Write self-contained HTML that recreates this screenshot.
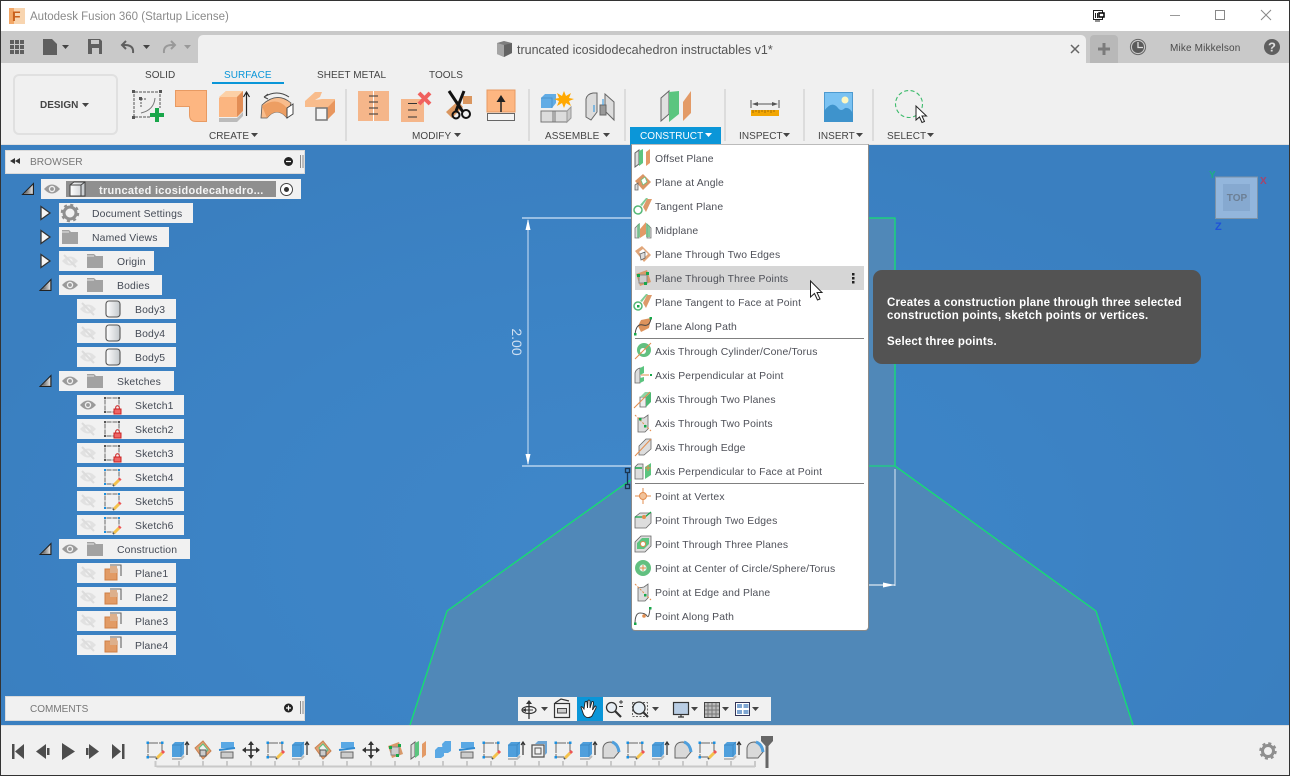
<!DOCTYPE html>
<html><head><meta charset="utf-8"><title>Autodesk Fusion 360</title>
<style>
html,body{margin:0;padding:0;width:1290px;height:776px;overflow:hidden;background:#f0f0f0}
body{position:relative;font-family:"Liberation Sans",sans-serif;color:#444}
div{position:absolute;box-sizing:border-box}
.t{white-space:nowrap;line-height:14px;height:14px}
.lab{font-size:10px;color:#444;white-space:nowrap;line-height:12px;margin-top:4px;letter-spacing:.05px}
.mi{left:655px;font-size:10.4px;letter-spacing:.14px;color:#4e5058;white-space:nowrap;line-height:14px;height:14px;margin-top:6px}
.row{background:#f1f1f1;height:20px}
.rt{font-size:10.4px;letter-spacing:.15px;color:#444a55;white-space:nowrap;line-height:14px;height:14px;margin-top:6px}
svg{position:absolute;left:0;top:0}
</style></head><body>
<!-- title bar -->
<div style="left:0;top:0;width:1290px;height:31px;background:#fff"></div>
<div class="t" style="left:30px;top:10px;font-size:11.5px;color:#8a8a8a">Autodesk Fusion 360 (Startup License)</div>
<!-- tab bar -->
<div style="left:0;top:31px;width:1290px;height:32px;background:#c9c9c9"></div>
<div style="left:198px;top:35px;width:888px;height:28px;background:#f0f0f0;border-radius:5px 5px 0 0"></div>
<div style="left:1090px;top:35px;width:28px;height:28px;background:#b8b8b8;border-radius:4px 4px 0 0"></div>
<div class="t" style="left:517px;top:43px;font-size:12.5px;color:#555">truncated icosidodecahedron instructables v1*</div>
<div class="t" style="left:1170px;top:42px;font-size:10px;letter-spacing:.15px;color:#4a4a4a">Mike Mikkelson</div>
<!-- ribbon -->
<div style="left:0;top:63px;width:1290px;height:82px;background:#f0f0f0"></div>
<div style="left:0;top:144px;width:1290px;height:1px;background:#e0e0e0"></div>
<div style="left:13px;top:74px;width:105px;height:61px;border:2px solid #e0e0e0;border-radius:6px"></div>
<div class="t" style="left:40px;top:99px;font-size:10px;font-weight:bold;color:#444">DESIGN</div>
<div class="lab" style="left:145px;top:66px">SOLID</div>
<div class="lab" style="left:224px;top:66px;color:#0a96d8">SURFACE</div>
<div style="left:212px;top:82px;width:72px;height:2px;background:#0a96d8"></div>
<div class="lab" style="left:317px;top:66px">SHEET METAL</div>
<div class="lab" style="left:429px;top:66px">TOOLS</div>
<div style="left:630px;top:127px;width:91px;height:18px;background:#0b96d8"></div>
<div class="lab" style="left:209px;top:127px">CREATE</div>
<div class="lab" style="left:412px;top:127px">MODIFY</div>
<div class="lab" style="left:545px;top:127px">ASSEMBLE</div>
<div class="lab" style="left:640px;top:127px;color:#fff">CONSTRUCT</div>
<div class="lab" style="left:739px;top:127px">INSPECT</div>
<div class="lab" style="left:818px;top:127px">INSERT</div>
<div class="lab" style="left:887px;top:127px">SELECT</div>
<!-- canvas -->
<div style="left:0;top:145px;width:1290px;height:581px;background:radial-gradient(ellipse 700px 420px at 640px 400px,#4087c9 0%,#3c83c5 60%,#3a7fc0 100%)"></div>
<!-- timeline -->
<div style="left:0;top:725px;width:1290px;height:51px;background:#f0f0f0;border-top:1px solid #dcdcdc"></div>

<svg width="1290" height="776" viewBox="0 0 1290 776" xmlns="http://www.w3.org/2000/svg">
<defs>
<g id="caret"><path d="M0 0H7L3.5 4Z" fill="#444"/></g>
<g id="eye"><path d="M-8 0Q0-9 8 0Q0 9-8 0Z" fill="#9a9a9a"/><circle r="3.2" fill="#f1f1f1"/><circle r="1.9" fill="#9a9a9a"/></g>
<g id="eyeoff"><path d="M-8 0Q0-9 8 0Q0 9-8 0Z" fill="#e1e1e1"/><circle r="2.6" fill="#f1f1f1"/><path d="M-6-6 6 6" stroke="#dcdcdc" stroke-width="2"/></g>
<g id="folder"><path d="M-8-7H-1L1-5H8V7H-8Z" fill="#a2a2a2"/><path d="M-8-5H-1" stroke="#e6e6e6"/></g>
<linearGradient id="bg" x1="0" x2="1"><stop offset="0" stop-color="#fff"/><stop offset="1" stop-color="#c4c8cc"/></linearGradient>
<g id="body"><rect x="-7" y="-8" width="14" height="16" rx="3" fill="url(#bg)" stroke="#555" stroke-width="1.1"/></g>
<g id="skbase"><path d="M-5.5-7H5.5M-7-5.5V5.5M-5.5 7H3M7-5.5V2" stroke="#666" stroke-width="1" fill="none" stroke-dasharray="5 1"/></g>
<g id="sklock"><use href="#skbase"/><g fill="#555"><rect x="-8" y="-8" width="2" height="2"/><rect x="6" y="-8" width="2" height="2"/><rect x="-8" y="6" width="2" height="2"/></g><rect x="2" y="4" width="7" height="5" fill="#e66" stroke="#c22"/><path d="M3.7 4V2.5a1.8 1.8 0 0 1 3.6 0V4" fill="none" stroke="#c22"/></g>
<g id="skpen"><use href="#skbase"/><g fill="#1a8fe0"><rect x="-8" y="-8" width="2" height="2"/><rect x="6" y="-8" width="2" height="2"/><rect x="-8" y="6" width="2" height="2"/></g><path d="M2 8 7 3" stroke="#f4c24c" stroke-width="3"/><path d="M7 3 8.5 1.500" stroke="#ee5555" stroke-width="3"/><path d="M1 9 2 8" stroke="#555" stroke-width="2"/></g>
<g id="plane"><path d="M-3-8H8V3" fill="none" stroke="#666" stroke-width="1.1"/><rect x="-8" y="-4" width="12" height="11" fill="#e29b65" stroke="#cf7f45"/><rect x="-3" y="-7" width="7" height="7" fill="#ddb08c"/></g>
<g id="tri"><path d="M0 11 11 0V11Z" fill="#999" stroke="#222" stroke-width="1"/><path d="M2 10 10 2V10Z" fill="url(#tg)"/></g>
<linearGradient id="tg" x1="0" x2="1"><stop offset="0" stop-color="#555"/><stop offset="1" stop-color="#ddd"/></linearGradient>
<g id="exp"><path d="M0 0 9 6.500 0 13Z" fill="#f5f5f5" stroke="#333" stroke-width="1.300"/></g>
<!-- timeline icons, centred -->
<g id="tsk"><path d="M-6-7H6M-7-6V6M-6 7H1M7-6V1" stroke="#666" fill="none" stroke-dasharray="9 1"/><g fill="#1a8fe0"><rect x="-8.500" y="-8.500" width="2.500" height="2.500"/><rect x="6" y="-8.500" width="2.500" height="2.500"/><rect x="-8.500" y="6" width="2.500" height="2.500"/></g><path d="M2 8 7 3" stroke="#f4c24c" stroke-width="3"/><path d="M7 3 9 1" stroke="#ee5555" stroke-width="3"/><path d="M1 9 2 8" stroke="#555" stroke-width="2"/></g>
<g id="tex"><path d="M-7-5-4-8H5V4L2 7H-7Z" fill="#4f9fdc"/><path d="M-7-5H2V7M2-5 5-8" stroke="#3d8ac4" fill="none"/><path d="M-7 9H2L5 6" stroke="#bbb" stroke-width="2" fill="none"/><path d="M8-8V5M6-5 8-8 10-5" stroke="#333" stroke-width="1.200" fill="none"/></g>
<g id="tpl"><path d="M-8-2 0-9 8 1 0 9Z" fill="#e0a075" stroke="#c98250"/><path d="M-4-2 0-6 5 0 0 5Z" fill="#f1f1f1" stroke="#5cc47f"/><rect x="-3" y="0" width="6" height="6" fill="#ccc" stroke="#555"/></g>
<g id="tsp"><path d="M-6-8H7V-2H-6Z" fill="#5aa8e4"/><path d="M-8 0 8-2" stroke="#2f8ad0" stroke-width="2"/><path d="M-6 2H6V8H-6Z" fill="#ccc" stroke="#666"/></g>
<g id="tmv"><path d="M0-8V8M-8 0H8" stroke="#333" stroke-width="1.600"/><path d="M0-9-3-5H3ZM0 9-3 5H3ZM-9 0-5-3V3ZM9 0 5-3V3Z" fill="#333"/></g>
<g id="tpt"><path d="M-7-4 4-8 8 4-3 8Z" fill="#d89a6b"/><rect x="-4" y="-3" width="8" height="8" fill="#ccc" stroke="#888"/><g fill="#17a74a"><rect x="-6" y="-4" width="3" height="3"/><rect x="3" y="-6" width="3" height="3"/><rect x="1" y="4" width="3" height="3"/></g></g>
<g id="tof"><path d="M-8-5-4-8V6L-8 9Z" fill="#ddd" stroke="#666"/><path d="M-4-7 0-9V5L-4 8Z" fill="#5cc47f"/><path d="M3-6 7-9V5L3 8Z" fill="#e39a66"/></g>
<g id="tjoin"><path d="M-8 0-5-3H1V6L-2 8H-8ZM-1-6 2-9H8V1L5 3H0Z" fill="#5aa8e4"/></g>
<g id="tshell"><rect x="-7" y="-5" width="12" height="12" fill="none" stroke="#555" stroke-width="1.300"/><rect x="-4" y="-2" width="6" height="6" fill="none" stroke="#555"/><path d="M-4-6-1-9H8V3L6 5V-6Z" fill="#6da6d6"/></g>
<g id="tfl"><path d="M-8 8V-2Q-7-8 0-8Q8-6 8 2L3 8Z" fill="#d9d9d9" stroke="#666"/><path d="M1-8Q7-6 8 2" stroke="#4f9fdc" stroke-width="3" fill="none"/></g>
</defs>

<!-- canvas geometry -->
<path d="M410 725 447 611 632 479V218H895V466L1096 611 1133 725Z" fill="#5088b8"/>
<path d="M410 725 447 611 632 479" fill="none" stroke="#14e070" stroke-width="1.300"/>
<path d="M632 218H895V466L1096 611 1133 725" fill="none" stroke="#14e070" stroke-width="1.300"/>
<path d="M632 466H895" fill="none" stroke="#19d47e" stroke-width="1.300"/>
<g stroke="#b7d3ee" fill="none"><path d="M522 218H632M522 466H632" stroke-width="1.500"/><path d="M528 220V464" stroke-width="1.200"/><path d="M895 469V586" stroke="#dbe7f3"/><path d="M868 585H895" stroke="#fff"/></g>
<path d="M528 219 525.500 230H530.500ZM528 465 525.500 454H530.500Z" fill="#fff"/>
<path d="M895 585 883 582.500V587.500Z" fill="#fff"/>
<g fill="none" stroke="#1b3550" stroke-width="1.300"><rect x="625.500" y="468.500" width="4" height="4"/><rect x="625.500" y="484.500" width="4" height="4"/></g><path d="M627.500 472V485" stroke="#1b3550" stroke-width="1.300"/>
<text transform="translate(512 342) rotate(90)" font-family="Liberation Sans" font-size="14" fill="#cfe0f2" text-anchor="middle">2.00</text>

<!-- navcube -->
<rect x="1215.500" y="177" width="42" height="41.500" fill="#93b6dc" stroke="#7d93a8"/>
<rect x="1223" y="184" width="27" height="27" fill="#86a9d0"/>
<text x="1237" y="201" font-family="Liberation Sans" font-size="10" font-weight="bold" fill="#6c7f95" text-anchor="middle">TOP</text>
<text x="1209" y="178" font-family="Liberation Sans" font-size="10" font-weight="bold" fill="#1dae82">Y</text>
<text x="1260" y="184" font-family="Liberation Sans" font-size="10" font-weight="bold" fill="#a8436a">X</text>
<text x="1215" y="230" font-family="Liberation Sans" font-size="11" font-weight="bold" fill="#1f52d8">Z</text>

<!-- titlebar icons -->
<rect x="9" y="8" width="16" height="16" fill="#f8d5b0"/><path d="M9 8H14V24H9Z" fill="#f2a766"/>
<text x="12" y="21" font-family="Liberation Sans" font-size="14" font-weight="bold" fill="#c9601a">F</text>
<g fill="none" stroke="#222"><rect x="1093.500" y="10.500" width="9" height="9"/><path d="M1095.500 13V18M1097.500 13V18M1095 21H1100" stroke-width="1"/></g><rect x="1099" y="13" width="5" height="4" fill="#fff" stroke="#000" stroke-width="1.500"/>
<path d="M1170 15.500H1180" stroke="#999"/><rect x="1215.500" y="10.500" width="9" height="9" fill="none" stroke="#888"/><path d="M1261 10 1271 20M1271 10 1261 20" stroke="#888"/>
<!-- tab bar icons -->
<g fill="#5f5f5f"><rect x="10" y="40" width="4" height="4"/><rect x="15" y="40" width="4" height="4"/><rect x="20" y="40" width="4" height="4"/><rect x="10" y="45" width="4" height="4"/><rect x="15" y="45" width="4" height="4"/><rect x="20" y="45" width="4" height="4"/><rect x="10" y="50" width="4" height="4"/><rect x="15" y="50" width="4" height="4"/><rect x="20" y="50" width="4" height="4"/></g>
<path d="M43 39H52L57 44V55H43Z" fill="#5f5f5f"/>
<use href="#caret" x="62" y="45"/>
<path d="M88 39H100L102 41V54H88Z" fill="#5f5f5f"/><rect x="91" y="40" width="8" height="4" fill="#c9c9c9"/><rect x="92" y="48" width="7" height="6" fill="#c9c9c9"/>
<path d="M133 53Q134 45 125 45H122M126 41 122 45 126 49" fill="none" stroke="#5f5f5f" stroke-width="2"/>
<use href="#caret" x="143" y="45"/>
<path d="M164 53Q163 45 172 45H175M171 41 175 45 171 49" fill="none" stroke="#999" stroke-width="2"/>
<path d="M184 45H191L187.500 49Z" fill="#999"/>
<path d="M497 43 504 41 512 43V53L504 57 497 54Z" fill="#7e7e7e"/><path d="M497 43 504 45V57L497 54Z" fill="#a5a5a5"/><path d="M504 45 512 43V53L504 57Z" fill="#636363"/>
<path d="M1071 45 1079 53M1079 45 1071 53" stroke="#666" stroke-width="1.500"/>
<path d="M1098 49H1110M1104 43V55" stroke="#7b7b7b" stroke-width="3"/>
<circle cx="1138" cy="47" r="7.600" fill="none" stroke="#666"/><circle cx="1138" cy="47" r="6" fill="#5a5a5a"/><path d="M1138 42V47.500H1143" stroke="#ddd" fill="none" stroke-width="1.300"/>
<circle cx="1272" cy="47" r="8" fill="#5f5f5f"/>
<text x="1272" y="51.500" font-family="Liberation Sans" font-size="13" font-weight="bold" fill="#ddd" text-anchor="middle">?</text>

<!-- ribbon carets + separators -->
<use href="#caret" x="82" y="103"/>
<use href="#caret" x="251" y="133"/><use href="#caret" x="454" y="133"/><use href="#caret" x="603" y="133"/><path d="M705 133H712L708.500 137Z" fill="#fff"/><use href="#caret" x="783" y="133"/><use href="#caret" x="856" y="133"/><use href="#caret" x="927" y="133"/>
<g stroke="#dcdcdc" stroke-width="2"><path d="M346 89V141M529 89V141M625 89V141M725 89V141M804 89V141M873 89V141"/></g>

<!-- create -->
<g fill="none" stroke="#555"><path d="M135 92H159M134 94V116M135 117H150M160 94V108" stroke-dasharray="3 1"/><path d="M141 113Q154 110 155 98" stroke="#777"/><path d="M141 99H146M141 99V108" stroke-dasharray="2 1"/></g>
<g fill="#555"><rect x="132" y="90" width="3" height="3"/><rect x="159" y="90" width="3" height="3"/><rect x="132" y="116" width="3" height="3"/><rect x="139" y="97" width="3" height="3"/></g>
<path d="M157 108V122M150 115H164" stroke="#19a64a" stroke-width="4"/>
<path d="M175.500 90.500H206.500V121.500H196Q189.500 121.500 189.500 115V106.500H175.500Z" fill="#fdb681" stroke="#e89a62"/>
<path d="M219 98 226 91H243V111L237 117H219Z" fill="#fbb580"/><path d="M237 97H219L226 91H243Z" fill="#fcd0a6"/><path d="M237 97 243 91V111L237 117Z" fill="#e28d55"/><path d="M219 118H237L243 112V116L237 122H219Z" fill="#bbb"/><path d="M246.500 116V93M243.500 97 246.500 92 249.500 97" stroke="#222" stroke-width="1.200" fill="none"/>
<path d="M262 105Q277 91 291 103L287 118Q277 106 267 118H261Z" fill="#f8bc8c" stroke="#555" stroke-width=".8"/><path d="M262 106Q277 96 287 108V118Q277 106 267 118" fill="#ed9e62"/><path d="M264 97Q277 89 289 97M264 97 268 94M264 97 268 99" fill="none" stroke="#444"/><path d="M287 108 293 104V114L287 118Z" fill="#fff" stroke="#444"/>
<path d="M305 101 315 92H322L320 97 315 100 322 99 335 99V112L327 120H316V107H305Z" fill="#f8bc8c"/><path d="M335 100V112L327 120V108Z" fill="#e8965e"/><rect x="316" y="108" width="11" height="12" fill="#f4f4f4" stroke="#777" stroke-width="1.500"/>
<!-- modify -->
<rect x="358" y="91" width="31" height="30" fill="#f5b68a"/><path d="M373.500 91V121" stroke="#fff"/><path d="M369 96H378M369 102H378M369 108H378M369 114H378" stroke="#333"/>
<rect x="401" y="99" width="23" height="23" fill="#f5b68a"/><path d="M408 103.500H417M408 110H417M408 117H417" stroke="#333" stroke-width="1"/><path d="M419 93 430 104M430 93 419 104" stroke="#f0605e" stroke-width="4"/>
<path d="M463 96H472V104H463ZM446 112 458 101 463 107 452 118Z" fill="#da965f"/><path d="M449 91 463 112M464 91 456 111" stroke="#111" stroke-width="3"/><circle cx="456" cy="115" r="3.500" fill="none" stroke="#111" stroke-width="2"/><circle cx="466" cy="114" r="4" fill="none" stroke="#111" stroke-width="2"/>
<rect x="487" y="90" width="28" height="22" fill="#fdb681" stroke="#e89a62"/><rect x="487.500" y="113.500" width="27" height="7" fill="#f4f4f4" stroke="#666"/><path d="M501 112V99" stroke="#222" stroke-width="1.500"/><path d="M501 95 496.500 102H505.500Z" fill="#222"/>
<!-- assemble -->
<path d="M541 111H555V122H541ZM553 111H567V122H553Z" fill="#dcdcdc" stroke="#777"/><path d="M567 111 571 107V118L567 122Z" fill="#c9c9c9" stroke="#999"/><path d="M541 98 545 94H556V103L552 108H541Z" fill="#62ace5"/><path d="M541 98H552V108" fill="none" stroke="#4b94cd"/>
<path d="M564 91 566 96 571 93 569 98 574 99 569 101 571 106 566 103 564 108 562 103 557 106 559 101 554 99 559 98 557 93 562 96Z" fill="#ffa800"/>
<path d="M586 117V99Q587 94 593 93H597V112L591 120Z" fill="#dcdcdc" stroke="#666"/><path d="M605 94 614 102V120L605 111Z" fill="#dcdcdc" stroke="#666"/><rect x="600" y="105" width="6" height="10" fill="#999" stroke="#666"/><path d="M594 105V112M603 99V105" stroke="#2391dd"/>
<!-- construct -->
<path d="M661 98 669 91V114L661 121Z" fill="#e0e0e0" stroke="#666"/><path d="M669 92 679 91V114L669 122 669 114Z" fill="#5bc57f"/><path d="M683 102 691 91V113L683 121Z" fill="#e39a66"/>
<!-- inspect -->
<path d="M751 100V108M779 100V108M753 104H777" stroke="#555" fill="none"/><path d="M752 104 758 102V106ZM778 104 772 102V106Z" fill="#555"/><rect x="751" y="110" width="28" height="6" fill="#f2a602"/><path d="M753 110V113M756 110V112M759 110V113M762 110V112M765 110V113M768 110V112M771 110V113M774 110V112" stroke="#a86f00"/>
<!-- insert -->
<rect x="824" y="92" width="29" height="30" fill="#7ac2f2"/><rect x="824.500" y="92.500" width="28" height="29" fill="none" stroke="#4d9ad0"/><circle cx="845" cy="100" r="3.500" fill="#fdf6c0"/><path d="M824 122V111Q832 100 838 108Q841 112 845 108Q850 107 853 114V122Z" fill="#3e93cc"/>
<!-- select -->
<circle cx="909" cy="104" r="13.500" fill="none" stroke="#3dbb6c" stroke-dasharray="4 2.500" stroke-width="1.100"/>
<path d="M916 106 916 120 919.500 117 922 122.500 924.500 121.500 922 116 926.500 116Z" fill="#fff" stroke="#222"/>

<!-- browser -->
<rect x="5.500" y="150.500" width="299" height="23" fill="#f1f1f1" stroke="#dadada"/>
<path d="M15 158 10 161 15 164ZM20 158 15 161 20 164Z" fill="#333"/>
<circle cx="288.500" cy="161.500" r="4.500" fill="#222"/><path d="M286 161.500H291" stroke="#fff" stroke-width="1.200"/>
<path d="M300.500 155V168M303 155V168" stroke="#888"/>
<rect x="41" y="179" width="260" height="20" fill="#f1f1f1"/><rect x="66" y="181" width="210" height="16" fill="#8f8f8f"/>
<use href="#eye" x="52" y="189"/>
<path d="M70 185 74 182H85V196H70Z" fill="url(#bg)" stroke="#444"/>
<path d="M70 185H81V196M81 185 85 182" fill="none" stroke="#444"/>
<circle cx="286.500" cy="189.500" r="6" fill="#fff" stroke="#444"/><circle cx="286.500" cy="189.500" r="2.500" fill="#333"/>
<use href="#tri" x="22.500" y="183.500"/>
</svg>

<div class="t" style="left:30px;top:156px;font-size:10.2px;color:#777">BROWSER</div>
<div class="t" style="left:99px;top:184px;font-size:11px;letter-spacing:.28px;font-weight:bold;color:#f4f4f4">truncated icosidodecahedro...</div>

<div class="row" style="left:59px;top:203px;width:134px"></div><div class="rt" style="left:92px;top:202px">Document Settings</div>
<div class="row" style="left:59px;top:227px;width:110px"></div><div class="rt" style="left:92px;top:226px">Named Views</div>
<div class="row" style="left:59px;top:251px;width:95px"></div><div class="rt" style="left:117px;top:250px">Origin</div>
<div class="row" style="left:59px;top:275px;width:103px"></div><div class="rt" style="left:117px;top:274px">Bodies</div>
<div class="row" style="left:77px;top:299px;width:99px"></div><div class="rt" style="left:135px;top:298px">Body3</div>
<div class="row" style="left:77px;top:323px;width:99px"></div><div class="rt" style="left:135px;top:322px">Body4</div>
<div class="row" style="left:77px;top:347px;width:99px"></div><div class="rt" style="left:135px;top:346px">Body5</div>
<div class="row" style="left:59px;top:371px;width:115px"></div><div class="rt" style="left:117px;top:370px">Sketches</div>
<div class="row" style="left:77px;top:395px;width:107px"></div><div class="rt" style="left:135px;top:394px">Sketch1</div>
<div class="row" style="left:77px;top:419px;width:107px"></div><div class="rt" style="left:135px;top:418px">Sketch2</div>
<div class="row" style="left:77px;top:443px;width:107px"></div><div class="rt" style="left:135px;top:442px">Sketch3</div>
<div class="row" style="left:77px;top:467px;width:107px"></div><div class="rt" style="left:135px;top:466px">Sketch4</div>
<div class="row" style="left:77px;top:491px;width:107px"></div><div class="rt" style="left:135px;top:490px">Sketch5</div>
<div class="row" style="left:77px;top:515px;width:107px"></div><div class="rt" style="left:135px;top:514px">Sketch6</div>
<div class="row" style="left:59px;top:539px;width:131px"></div><div class="rt" style="left:117px;top:538px">Construction</div>
<div class="row" style="left:77px;top:563px;width:99px"></div><div class="rt" style="left:135px;top:562px">Plane1</div>
<div class="row" style="left:77px;top:587px;width:99px"></div><div class="rt" style="left:135px;top:586px">Plane2</div>
<div class="row" style="left:77px;top:611px;width:99px"></div><div class="rt" style="left:135px;top:610px">Plane3</div>
<div class="row" style="left:77px;top:635px;width:99px"></div><div class="rt" style="left:135px;top:634px">Plane4</div>

<div style="left:5px;top:696px;width:300px;height:25px;background:#f1f1f1;border:1px solid #dadada"></div>
<div class="t" style="left:30px;top:703px;font-size:10px;color:#777">COMMENTS</div>
<!-- nav bar -->
<div style="left:518px;top:697px;width:253px;height:24px;background:#f1f1f1"></div>
<div style="left:577px;top:697px;width:26px;height:24px;background:#0b96d8"></div>

<!-- dropdown -->
<div style="left:631px;top:144px;width:238px;height:487px;background:#fff;border:1px solid #8a8a8a;border-top-color:#bbb;border-radius:0 0 4px 4px"></div>
<div style="left:635px;top:266px;width:229px;height:24px;background:#d6d6d6"></div>
<div style="left:635px;top:338px;width:229px;height:1px;background:#808080"></div>
<div style="left:635px;top:483px;width:229px;height:1px;background:#808080"></div>
<div class="mi" style="top:147px">Offset Plane</div>
<div class="mi" style="top:171px">Plane at Angle</div>
<div class="mi" style="top:195px">Tangent Plane</div>
<div class="mi" style="top:219px">Midplane</div>
<div class="mi" style="top:243px">Plane Through Two Edges</div>
<div class="mi" style="top:267px">Plane Through Three Points</div>
<div class="mi" style="top:291px">Plane Tangent to Face at Point</div>
<div class="mi" style="top:315px">Plane Along Path</div>
<div class="mi" style="top:340px">Axis Through Cylinder/Cone/Torus</div>
<div class="mi" style="top:364px">Axis Perpendicular at Point</div>
<div class="mi" style="top:388px">Axis Through Two Planes</div>
<div class="mi" style="top:412px">Axis Through Two Points</div>
<div class="mi" style="top:436px">Axis Through Edge</div>
<div class="mi" style="top:460px">Axis Perpendicular to Face at Point</div>
<div class="mi" style="top:485px">Point at Vertex</div>
<div class="mi" style="top:509px">Point Through Two Edges</div>
<div class="mi" style="top:533px">Point Through Three Planes</div>
<div class="mi" style="top:557px">Point at Center of Circle/Sphere/Torus</div>
<div class="mi" style="top:581px">Point at Edge and Plane</div>
<div class="mi" style="top:605px">Point Along Path</div>
<!-- tooltip -->
<div style="left:873px;top:270px;width:328px;height:94px;background:#535353;border-radius:9px"></div>
<div class="t" style="left:887px;top:297px;font-size:11.5px;letter-spacing:.19px;font-weight:bold;color:#fff;line-height:13px;height:52px">Creates a construction plane through three selected<br>construction points, sketch points or vertices.<br><br>Select three points.</div>

<svg width="1290" height="776" viewBox="0 0 1290 776" xmlns="http://www.w3.org/2000/svg">
<!-- tree icons -->
<use href="#exp" x="41" y="206.500"/><use href="#exp" x="41" y="230.500"/><use href="#exp" x="41" y="254.500"/>
<use href="#tri" x="40" y="279.500"/><use href="#tri" x="40" y="375.500"/><use href="#tri" x="40" y="543.500"/>
<circle cx="70" cy="213" r="6" fill="none" stroke="#8f8f8f" stroke-width="3"/><circle cx="70" cy="213" r="8" fill="none" stroke="#8f8f8f" stroke-width="2.500" stroke-dasharray="3 3.280"/>
<use href="#folder" x="70" y="237"/>
<use href="#eyeoff" x="70" y="261"/><use href="#folder" x="95" y="261"/>
<use href="#eye" x="70" y="285"/><use href="#folder" x="95" y="285"/>
<use href="#eyeoff" x="88" y="309"/><use href="#body" x="113" y="309"/>
<use href="#eyeoff" x="88" y="333"/><use href="#body" x="113" y="333"/>
<use href="#eyeoff" x="88" y="357"/><use href="#body" x="113" y="357"/>
<use href="#eye" x="70" y="381"/><use href="#folder" x="95" y="381"/>
<use href="#eye" x="88" y="405"/><use href="#sklock" x="112" y="405"/>
<use href="#eyeoff" x="88" y="429"/><use href="#sklock" x="112" y="429"/>
<use href="#eyeoff" x="88" y="453"/><use href="#sklock" x="112" y="453"/>
<use href="#eyeoff" x="88" y="477"/><use href="#skpen" x="112" y="477"/>
<use href="#eyeoff" x="88" y="501"/><use href="#skpen" x="112" y="501"/>
<use href="#eyeoff" x="88" y="525"/><use href="#skpen" x="112" y="525"/>
<use href="#eye" x="70" y="549"/><use href="#folder" x="95" y="549"/>
<use href="#eyeoff" x="88" y="573"/><use href="#plane" x="113" y="573"/>
<use href="#eyeoff" x="88" y="597"/><use href="#plane" x="113" y="597"/>
<use href="#eyeoff" x="88" y="621"/><use href="#plane" x="113" y="621"/>
<use href="#eyeoff" x="88" y="645"/><use href="#plane" x="113" y="645"/>
<!-- comments -->
<circle cx="288.500" cy="708" r="4.500" fill="#222"/><path d="M286 708H291M288.500 705.500V710.500" stroke="#fff" stroke-width="1.200"/>
<path d="M300.500 701V714M303 701V714" stroke="#888"/>

<!-- menu icons -->
<use href="#tof" x="643" y="158"/>
<g transform="translate(643 182)"><path d="M-8-1 0-8 8 0 0 8Z" fill="#da9666"/><path d="M-2-2 2-5 4 0 0 3Z" fill="#fff" stroke="#5cc47f" stroke-width=".7"/><path d="M-8 8V3L-5 1V8Z" fill="#ddd" stroke="#666" stroke-width=".8"/></g>
<g transform="translate(643 206)"><circle cx="-5" cy="4" r="4" fill="#fff" stroke="#55b877" stroke-width="1.500"/><path d="M-3-1 3-8H5L-1 0Z" fill="#7dcb94"/><path d="M0 1 4-7H9L3 6Z" fill="#dd9a6a"/></g>
<g transform="translate(643 230)"><path d="M-8 8V-2L-4-6V8ZM4-6 8-2V8H4Z" fill="#ddd" stroke="#777" stroke-width=".8"/><path d="M-3-1 3-8V4L-3 8Z" fill="#e39a66"/><path d="M-6-5-3-7V7L-6 8ZM3-7 7-4V7H3Z" fill="#62c080" opacity=".7"/></g>
<g transform="translate(643 254)"><path d="M-8-3-1-8 8 1 1 8Z" fill="#e1a679"/><path d="M-4-2 0-5 5 0 1 4Z" fill="#fff"/><path d="M-3 0 2-2V4L-2 6Z" fill="#ddd" stroke="#666" stroke-width=".8"/></g>
<use href="#tpt" x="643" y="278"/>
<g transform="translate(643 302)"><circle cx="-5" cy="4" r="4" fill="#fff" stroke="#55b877" stroke-width="1.500"/><rect x="-6" y="3" width="2.500" height="2.500" fill="#17a74a"/><path d="M-3-1 3-8H5L-1 0Z" fill="#7dcb94"/><path d="M0 1 4-7H9L3 6Z" fill="#dd9a6a"/></g>
<g transform="translate(643 326)"><path d="M-5 0-2-6 8-8 6 2-2 6Z" fill="#dd935c"/><path d="M-8 9Q-7-3 0-1T8-8" fill="none" stroke="#444"/><rect x="-9" y="7" width="2.500" height="2.500" fill="#17a74a"/><rect x="6.500" y="-9" width="2.500" height="2.500" fill="#17a74a"/></g>
<g transform="translate(643 351)"><circle cx="1" cy="-1" r="7" fill="#62c080"/><circle cx="0" cy="0" r="3" fill="#fff"/><path d="M-8 8 8-8" stroke="#e38d4e" stroke-width="1"/></g>
<g transform="translate(643 375)"><path d="M-8 8V-2Q-7-6-3-7V8Z" fill="#ddd" stroke="#666" stroke-width=".8"/><path d="M-3-7 1-9V-2L-3 0ZM-3 3 1 2V6L-3 8Z" fill="#5cc47f"/><path d="M-2 0H6" stroke="#e38d4e"/><rect x="7" y="-1" width="2" height="2" fill="#17a74a"/></g>
<g transform="translate(643 399)"><path d="M-3 8V-2H3V8Z" fill="#eee" stroke="#666" stroke-width=".8"/><path d="M3-2 8-7V3L3 8Z" fill="#4db873"/><path d="M-3-2 2-7H8L3-2Z" fill="#8dd4a4"/><path d="M-9 9 7-7" stroke="#e38d4e"/></g>
<g transform="translate(643 423)"><path d="M-5-5 1-5 5-8V6L2 9H-5Z" fill="#ddd" stroke="#666" stroke-width=".8"/><path d="M-8-8 8 8" stroke="#e38d4e" stroke-dasharray="2 1.500"/><rect x="-4" y="-5" width="2.500" height="2.500" fill="#17a74a"/><rect x="1" y="2" width="2.500" height="2.500" fill="#17a74a"/></g>
<g transform="translate(643 447)"><path d="M-4 8V-1L3-8H8V2L1 8Z" fill="#ddd" stroke="#666" stroke-width=".8"/><path d="M-8 9 8-8" stroke="#e38d4e"/></g>
<g transform="translate(643 471)"><path d="M-8 8V-4L-5-7H0V8Z" fill="#ddd" stroke="#666" stroke-width=".8"/><path d="M-8-3H-1" stroke="#17a74a" stroke-width="1.500"/><path d="M2-4 8-8V4L2 8Z" fill="#5cc47f"/><path d="M5-6V0M2-3H8" stroke="#e38d4e"/></g>
<g transform="translate(643 496)"><path d="M-8 0H8M0-8V8" stroke="#e38d4e"/><circle r="3.500" fill="#f1c29a" stroke="#e38d4e"/></g>
<g transform="translate(643 520)"><path d="M-8 8V-3L-3-7H8V3L3 8Z" fill="#ddd" stroke="#666" stroke-width=".8"/><path d="M-8-3H2L8-8" stroke="#17a74a" fill="none" stroke-width="1.200"/><circle cx="1" cy="-3" r="2" fill="#e38d4e"/></g>
<g transform="translate(643 544)"><path d="M-8 8V-2L-2-8H8V2L2 8Z" fill="#ddd" stroke="#666" stroke-width=".8"/><path d="M-6 5V-1L-1-6H6V0L1 5Z" fill="#5cc47f"/><circle cx="0" cy="0" r="2.500" fill="#fff" stroke="#e38d4e"/></g>
<g transform="translate(643 568)"><circle r="8" fill="#62c080"/><circle r="3.500" fill="#e8f5ec"/><path d="M-3 0H3M0-3V3" stroke="#e38d4e"/></g>
<g transform="translate(643 592)"><path d="M-5-4 1-5 5-8V6L2 9H-5Z" fill="#ddd" stroke="#666" stroke-width=".8"/><path d="M-8-8 8 8" stroke="#e38d4e" stroke-dasharray="2 1.500"/><rect x="1" y="2" width="2.500" height="2.500" fill="#17a74a"/></g>
<g transform="translate(643 616)"><path d="M-8 8Q-8-3-3-3T4 0 7-8" fill="none" stroke="#555"/><circle cx="1" cy="0" r="1.800" fill="#e38d4e"/><rect x="-9" y="6.500" width="2.500" height="2.500" fill="#17a74a"/><rect x="6" y="-9" width="2.500" height="2.500" fill="#17a74a"/></g>
<!-- kebab + cursor -->
<g fill="#222"><rect x="852" y="273" width="2.500" height="2.500"/><rect x="852" y="277" width="2.500" height="2.500"/><rect x="852" y="281" width="2.500" height="2.500"/></g>
<path d="M810.500 281V297L814.500 293.500 817.500 300 820 299 817 292.500 822 292.500Z" fill="#fff" stroke="#222"/>

<!-- nav bar icons -->
<g fill="none" stroke="#333"><path d="M529 702V719" stroke-width="1.300"/><ellipse cx="529" cy="710" rx="7" ry="3.500" stroke-width="1.200"/><path d="M525 710H533"/></g>
<path d="M529 700 526 704H532ZM522 710 526 708V712Z" fill="#333"/>
<use href="#caret" x="541" y="707"/>
<g fill="none" stroke="#333" stroke-width="1.200"><rect x="554.500" y="703.500" width="15" height="14"/><path d="M555 703 561 699 569 701"/></g><rect x="557.500" y="708.500" width="9" height="4.500" fill="#ccc" stroke="#444"/>
<path d="M583 713 581 707Q582 706 584 709L585 702Q586.500 701 587 702L587.500 708 588 700.500Q589.500 699.500 590 701L590 708 592 701.500Q593.500 701 593.500 703L592.500 710 595 706Q596.500 706 596 708L592 716Q590 718 587 717.500Q584 716.500 583 713Z" fill="#fff" stroke="#222" stroke-width=".9"/>
<circle cx="611.500" cy="707.500" r="5" fill="#e8eef4" stroke="#333" stroke-width="1.300"/><path d="M615 711 621 717" stroke="#333" stroke-width="2.200"/><path d="M619 702H623M621 700V704M619 706.500H623" stroke="#333" stroke-width=".9"/>
<rect x="632.500" y="702.500" width="15" height="14" fill="none" stroke="#666" stroke-dasharray="2 1.500"/><circle cx="639" cy="708" r="6" fill="#e4edf5" stroke="#333" stroke-width="1.300"/><path d="M643 712 648 717" stroke="#333" stroke-width="2.200"/>
<use href="#caret" x="652" y="707"/>
<rect x="673.500" y="702.500" width="15" height="12" fill="#b9cde4" stroke="#333" stroke-width="1.200"/><path d="M678 717H684M681 714V717" stroke="#333" stroke-width="1.200"/>
<use href="#caret" x="691" y="707"/>
<rect x="704.500" y="702.500" width="15" height="15" fill="#bbb" stroke="#444"/><path d="M708 703V717M712 703V717M716 703V717M705 706H719M705 710H719M705 714H719" stroke="#777"/>
<use href="#caret" x="722" y="707"/>
<rect x="735.500" y="702.500" width="14" height="13" fill="#fff" stroke="#335"/><rect x="737" y="704" width="5" height="4" fill="#7ea5d2"/><rect x="743.500" y="704" width="5" height="4" fill="#7ea5d2"/><rect x="737" y="710" width="5" height="4" fill="#7ea5d2"/><rect x="743.500" y="710" width="5" height="4" fill="#7ea5d2"/>
<use href="#caret" x="752" y="707"/>

<!-- timeline controls -->
<g fill="#4d4d4d"><rect x="12" y="744" width="2.500" height="15"/><path d="M24 744V759L15 751.500Z"/><path d="M36 751.500 46 744V759Z"/><rect x="47" y="748" width="2.500" height="7"/><path d="M62 743 75 751.500 62 760Z"/><rect x="86" y="748" width="2.500" height="7"/><path d="M89 744V759L99 751.500Z"/><path d="M112 744V759L121 751.500Z"/><rect x="122" y="744" width="2.500" height="15"/></g>
<!-- timeline track -->
<path d="M156.500 766.500H755" stroke="#c9c9c9" stroke-width="2"/>
<path d="M155.500 761V767M179 761V767M203 761V767M227 761V767M251 761V767M275 761V767M299 761V767M323 761V767M347 761V767M371 761V767M395 761V767M419 761V767M443 761V767M467 761V767M491 761V767M515 761V767M539 761V767M563 761V767M587 761V767M611 761V767M635 761V767M659 761V767M683 761V767M707 761V767M731 761V767M755 761V767" stroke="#c9c9c9" stroke-width="2"/>
<use href="#tsk" x="155" y="750"/><use href="#tex" x="179" y="750"/><use href="#tpl" x="203" y="750"/><use href="#tsp" x="227" y="750"/><use href="#tmv" x="251" y="750"/>
<use href="#tsk" x="275" y="750"/><use href="#tex" x="299" y="750"/><use href="#tpl" x="323" y="750"/><use href="#tsp" x="347" y="750"/><use href="#tmv" x="371" y="750"/>
<use href="#tpt" x="395" y="750"/><use href="#tof" x="419" y="750"/><use href="#tjoin" x="443" y="750"/><use href="#tsp" x="467" y="750"/><use href="#tsk" x="491" y="750"/><use href="#tex" x="515" y="750"/><use href="#tshell" x="539" y="750"/><use href="#tsk" x="563" y="750"/><use href="#tex" x="587" y="750"/><use href="#tfl" x="611" y="750"/><use href="#tsk" x="635" y="750"/><use href="#tex" x="659" y="750"/><use href="#tfl" x="683" y="750"/><use href="#tsk" x="707" y="750"/><use href="#tex" x="731" y="750"/><use href="#tfl" x="755" y="750"/>
<path d="M761 736H773V741L768.500 746V768H765.500V746L761 741Z" fill="#666"/>
<!-- gear -->
<circle cx="1268" cy="751" r="5.500" fill="none" stroke="#8f8f8f" stroke-width="3"/><circle cx="1268" cy="751" r="7.500" fill="none" stroke="#8f8f8f" stroke-width="2.500" stroke-dasharray="3 2.890"/>
<!-- window frame -->
<path d="M0 .5H1290M.5 0V776M1289.500 0V776M0 775.500H1290" stroke="#333" fill="none"/>
</svg>
</body></html>
